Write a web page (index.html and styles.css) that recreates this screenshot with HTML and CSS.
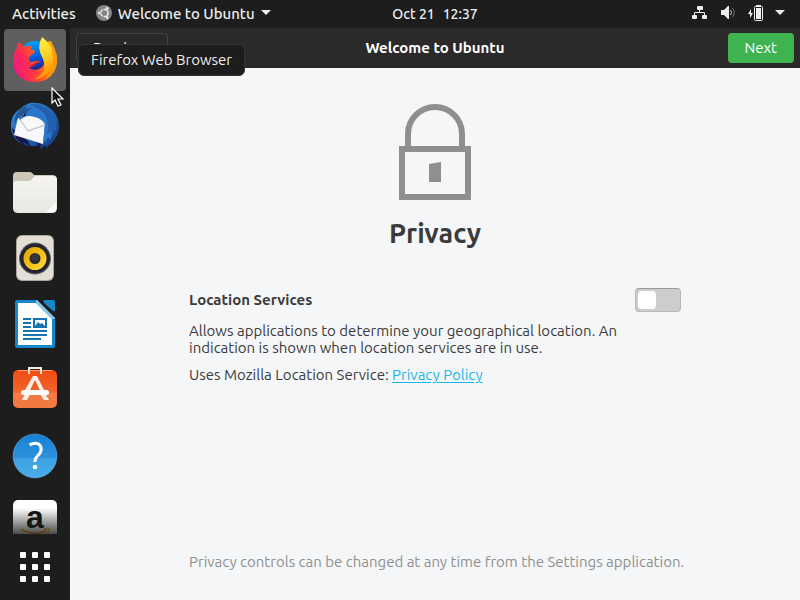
FILE: index.html
```html
<!doctype html>
<html lang="en">
<head>
<meta charset="utf-8">
<meta name="viewport" content="width=device-width, initial-scale=1.0"/>
<title>Welcome to Ubuntu</title>
<link rel="stylesheet" href="styles.css">
</head>
<body>
<header class="topbar">
	<nav class="menus">
		<button type="button">Activities</button>
		<button type="button" class="app-menu">
			<svg width="16" height="16" viewBox="0 0 16 16" aria-hidden="true">
				<circle cx="8" cy="8" r="8" fill="#858585"/>
				<circle cx="8.5" cy="8" r="3.6" fill="none" stroke="#eee" stroke-width="1.5"/>
				<path d="M9 8L5 1M9 8L5 15M1 8h5" stroke="#858585" stroke-width="1"/>
				<circle cx="8.5" cy="8" r="2.5" fill="#858585"/>
				<circle cx="3.2" cy="8" r="1.3" fill="#eee"/>
				<circle cx="11.2" cy="3.4" r="1.3" fill="#eee"/>
				<circle cx="11.2" cy="12.6" r="1.3" fill="#eee"/>
			</svg>
			<span>Welcome to Ubuntu</span>
			<svg width="10" height="6" viewBox="0 0 10 6" aria-hidden="true"><path d="M0 0h10L5 5z" fill="#eee"/></svg>
		</button>
	</nav>
	<button type="button" class="clock"><span>Oct 21</span><span>12:37</span></button>
	<button type="button" class="status" aria-label="System menu">
		<svg width="16" height="16" viewBox="0 0 16 16" fill="#eee"><rect x="6" y="1" width="6" height="4" rx="1"/><rect x="1" y="10" width="5" height="4" rx="1"/><rect x="11" y="10" width="5" height="4" rx="1"/><path d="M8.500 5v3M3.500 10V7.500h10V10" fill="none" stroke="#eee"/></svg>
		<svg width="16" height="16" viewBox="0 0 16 16"><path d="M2 5h3l4-4h1v13H9l-4-4H2z" fill="#eee"/><path d="M11.500 5q2 2.500 0 5" fill="none" stroke="#ccc"/><path d="M13.500 3q3.500 4.500 0 9" fill="none" stroke="#777"/></svg>
		<svg width="16" height="16" viewBox="0 0 16 16"><path d="M4 4L1 9h2v4l3-5H4z" fill="#eee"/><rect x="7.500" y="1.500" width="8" height="14" rx="1" fill="none" stroke="#eee"/><path d="M9 0h5v1H9zM9 3h5v11H9z" fill="#eee"/></svg>
		<svg width="10" height="6" viewBox="0 0 10 6"><path d="M0 0h10L5 5z" fill="#eee"/></svg>
	</button>
</header>

<aside class="dock">
	<ul class="apps">
		<li><button type="button" class="active" aria-label="Firefox Web Browser">
			<svg viewBox="0 0 48 48">
				<defs>
					<linearGradient id="ff-body" x1="0" y1="0.700" x2="1" y2="0.300"><stop offset="0" stop-color="#e8168b"/><stop offset=".25" stop-color="#ff2f4d"/><stop offset=".6" stop-color="#ff6a16"/><stop offset="1" stop-color="#ffb800"/></linearGradient>
					<linearGradient id="ff-globe" x1="0.300" y1="0" x2="0.600" y2="1"><stop offset="0" stop-color="#00a8ff"/><stop offset=".5" stop-color="#0060df"/><stop offset="1" stop-color="#26157c"/></linearGradient>
					<linearGradient id="ff-flame" x1="0" y1="0" x2="0.300" y2="1"><stop offset="0" stop-color="#fff44f"/><stop offset=".5" stop-color="#ffd72a"/><stop offset="1" stop-color="#ff9400"/></linearGradient>
				</defs>
				<path d="M8 6l4 4 28-5 4 9q2 4 2 10c0 13-9 22-22 22S2 38 2 25c0-5 1-9 4-13q0-4 2-6z" fill="url(#ff-body)"/>
				<circle cx="24" cy="21" r="16" fill="url(#ff-globe)"/>
				<path d="M8 6q1 3 4 5 5-2 9-1-2 2-1 4 4 0 4 1 0 2-5 5-2 3-1 5 2 2 6 0 3-1 5 1-3 0-5 3-3 3-7 2 7 6 14 0 4-4 3-10l9-7q3 16-7 22c-13 7-27-1-30-14-1-6 0-10 2-13z" fill="url(#ff-body)"/>
				<path d="M18 29q4 1 7-3 2-1 4 0-3 0-5 3-3 3-6 0z" fill="#c8123b"/>
				<path d="M31 1q4 3 7 7c8 9 7 23-3 31q-5 4-11 4 13-7 8-20-7-12-1-22z" fill="url(#ff-flame)"/>
				<path d="M38 5q6 5 6 11 2 2 2 9-1 13-12 19 8-11 8-21 0-11-4-18z" fill="#ff980e"/>
			</svg>
		</button></li>
		<li><button type="button" aria-label="Thunderbird Mail">
			<svg viewBox="0 0 48 48">
				<defs>
					<linearGradient id="tb-bird" x1="0" y1="0" x2="1" y2="1"><stop offset="0" stop-color="#3a97e0"/><stop offset=".5" stop-color="#2166bb"/><stop offset="1" stop-color="#16387e"/></linearGradient>
				</defs>
				<path d="M9 7q4-4 10-6c17-2 29 10 29 23 0 8-4 15-11 20l-2 3 0-4-6 4 1-4C14 47 0 39 0 24 0 15 4 10 9 7z" fill="url(#tb-bird)"/>
				<path d="M1 26q2 13 14 18l-3-4 8 5-3-6z" fill="#1a1750"/>
				<path d="M24 39q4 3 2 7l5-3z" fill="#1a1750"/>
				<path d="M7 16q5-2 12-2 11 1 15 8l-2 20L3 33z" fill="#f8f8fa"/>
				<path d="M8 16l9 13 17-6" fill="none" stroke="#aeb2bc" stroke-width="1"/>
				<path d="M17 3q14-2 22 10 7 12 0 25l-2-3-3 6-1-3-1 3 2-19q-3-6-12-8-6-1-9 1l-4 3-2-4Q8 7 17 3z" fill="#2a78ca"/>
				<path d="M27 7q13 6 9 26l3-4 1 5 3-7 2 2q2-17-12-24-7-4-14-3z" fill="#2360ad"/>
				<path d="M17 3Q4 7 3 22l5-7q4-4 7-2 2-6 7-7-4-1-8 2 1-3 3-5z" fill="#215796"/>
				<circle cx="13" cy="13" r="1.500" fill="#111827"/>
				<circle cx="12.500" cy="12.500" r=".5" fill="#d8c890"/>
			</svg>
		</button></li>
		<li><button type="button" aria-label="Files">
			<svg viewBox="0 0 48 48">
				<defs><linearGradient id="folder" x1="0" y1="0" x2="0" y2="1"><stop offset="0" stop-color="#f5f4f1"/><stop offset="1" stop-color="#e9e7e2"/></linearGradient></defs>
				<path d="M2 8q0-4 4-4h13q2 0 4 3h18q5 0 5 5v10H2z" fill="#cdc7ba"/>
				<path d="M2 16q0-3 4-3h12q2 0 4-3 1-2 3-2h17q4 0 4 4v28q0 5-5 5H7q-5 0-5-5z" fill="url(#folder)"/>
				<path d="M35 44l10-10v6q0 4-4 4z" fill="#fbfaf8"/>
			</svg>
		</button></li>
		<li><button type="button" aria-label="Rhythmbox">
			<svg viewBox="0 0 48 48">
				<defs><linearGradient id="cone" x1="0" y1="0" x2="1" y2="1"><stop offset="0" stop-color="#dda408"/><stop offset=".5" stop-color="#f2bf15"/><stop offset="1" stop-color="#ffdc4c"/></linearGradient></defs>
				<rect x="5" y="1" width="38" height="46" rx="6" fill="#aaa59a"/>
				<rect x="6" y="2" width="36" height="44" rx="5" fill="#e4dfd5"/>
				<circle cx="24" cy="24.500" r="16" fill="#63636a"/>
				<circle cx="24" cy="24.500" r="15" fill="#24242e"/>
				<circle cx="24" cy="24.500" r="11.500" fill="url(#cone)"/>
				<circle cx="24" cy="24.500" r="5.500" fill="#2a2a2e"/>
				<circle cx="24" cy="23.500" r="3.500" fill="#38383c"/>
			</svg>
		</button></li>
		<li><button type="button" aria-label="LibreOffice Writer">
			<svg viewBox="0 0 48 48">
				<path d="M6 0h20l18 18v28q0 2-2 2H6q-2 0-2-2V2q0-2 2-2z" fill="#1787ca"/>
				<path d="M7 3h18l16 16v26H7z" fill="#fff"/>
				<path d="M25 0h1l18 18v1h-3L25 3z" fill="#8bc6ea"/>
				<path d="M33 0h9q2 0 2 2v9q-1 1-3-1L33 3q-1-2 0-3z" fill="#1787ca"/>
				<path d="M12 19h8M12 23h8M12 27h8M12 31h24M12 35h24M12 39h18" stroke="#1574b4" stroke-width="2"/>
				<rect x="23" y="19" width="12" height="8" fill="none" stroke="#1574b4" stroke-width="2"/>
				<path d="M24 26l3-4 2 2 2-1 3 3z" fill="#1574b4"/>
			</svg>
		</button></li>
		<li><button type="button" aria-label="Ubuntu Software">
			<svg viewBox="0 0 48 48">
				<defs><linearGradient id="bag" x1="0" y1="0" x2="0" y2="1"><stop offset="0" stop-color="#f04b12"/><stop offset=".59" stop-color="#f0672d"/><stop offset=".6" stop-color="#f27b48"/><stop offset="1" stop-color="#f1793f"/></linearGradient></defs>
				<rect x="2" y="4" width="44" height="38" rx="5" fill="url(#bag)"/>
				<path d="M7 4.500h34" stroke="#ff9d70"/>
				<path d="M18 8V2h12v6" fill="none" stroke="#fbe9df" stroke-width="2"/>
				<path d="M22 10h4l7 14h-4l-5-10-5 10h-5zM14 28h5l-3 6h-5zM29 28h5l4 6h-5z" fill="#fff1e9"/>
				<rect x="10" y="24" width="28" height="5" rx="2.500" fill="#fff"/>
			</svg>
		</button></li>
		<li><button type="button" aria-label="Help">
			<svg viewBox="0 0 48 48">
				<defs><linearGradient id="help" x1="0" y1="0" x2="0" y2="1"><stop offset="0" stop-color="#1780d4"/><stop offset=".54" stop-color="#2c92dc"/><stop offset=".55" stop-color="#3ba0e3"/><stop offset="1" stop-color="#4caee9"/></linearGradient></defs>
				<circle cx="24" cy="24" r="22" fill="url(#help)" stroke="#66b3e8" stroke-width=".5"/>
				<path d="M18.500 13q5-3 9-1 4 3 2 8-1 2-3 4-3 3-2.500 6" fill="none" stroke="#fff" stroke-width="3"/>
				<circle cx="24" cy="35" r="2.300" fill="#fff"/>
			</svg>
		</button></li>
		<li><button type="button" aria-label="Amazon">
			<svg viewBox="0 0 48 48">
				<rect x="2" y="2" width="44" height="44" rx="5" fill="#fff"/>
				<text class="amazon" x="24" y="30" text-anchor="middle">a</text>
				<path d="M10 31q14 8 26 1" fill="none" stroke="#ff9900" stroke-width="1.500"/>
				<path d="M33 31q6-2 5 0 0 3-2 5" fill="none" stroke="#ff9900"/>
			</svg>
		</button></li>
	</ul>
	<button type="button" class="show-apps" aria-label="Show Applications">
		<svg width="30" height="30" viewBox="0 0 30 30" fill="#fff">
			<rect width="6" height="6" rx="1"/><rect x="12" width="6" height="6" rx="1"/><rect x="24" width="6" height="6" rx="1"/>
			<rect y="12" width="6" height="6" rx="1"/><rect x="12" y="12" width="6" height="6" rx="1"/><rect x="24" y="12" width="6" height="6" rx="1"/>
			<rect y="24" width="6" height="6" rx="1"/><rect x="12" y="24" width="6" height="6" rx="1"/><rect x="24" y="24" width="6" height="6" rx="1"/>
		</svg>
	</button>
</aside>

<section class="window">
	<header class="titlebar">
		<button type="button" class="btn btn-prev">Previous</button>
		<h1>Welcome to Ubuntu</h1>
		<button type="button" class="btn btn-next">Next</button>
	</header>
	<main class="page">
		<svg class="lock" width="72" height="96" viewBox="0 0 72 96" aria-hidden="true">
			<path d="M9 43V30a27 27 0 0 1 54 0v13M3 45h66v48H3z" fill="none" stroke="#8e908f" stroke-width="6"/>
			<path d="M30 60l12-2v20H30z" fill="#8e908f"/>
		</svg>
		<h2>Privacy</h2>
		<div class="setting">
			<div class="row">
				<label for="location">Location Services</label>
				<input type="checkbox" id="location" class="switch" role="switch">
			</div>
			<p>Allows applications to determine your geographical location. An indication is shown when location services are in use.</p>
			<p>Uses Mozilla Location Service: <a href="#privacy">Privacy Policy</a></p>
		</div>
		<p class="note">Privacy controls can be changed at any time from the Settings application.</p>
	</main>
</section>

<div class="tooltip" role="tooltip">Firefox Web Browser</div>
<svg class="cursor" width="14" height="20" viewBox="0 0 14 20" aria-hidden="true">
	<path d="M1 1v15l3-3 3 6 3-1-3-6h5z" fill="#111" stroke="#fff" stroke-width="1.200"/>
</svg>
</body>
</html>
```
FILE: styles.css
```css
*{box-sizing:border-box}
html,body,ul,h1,h2,p{margin:0;padding:0}
ul{list-style:none}
html,body{height:100%}
body{display:grid;grid-template:28px 1fr / 70px 1fr;position:relative;overflow:hidden;background:#1d1d1d;color:#3b3b3b;font:15px/17px Ubuntu,"Noto Sans",sans-serif}
button{margin:0;padding:0;border:0;background:none;color:inherit;font:inherit}
svg{display:block;flex:none}

/* top panel */
.topbar{grid-column:1 / 3;display:grid;grid-template-columns:70px 1fr auto 1fr;align-items:center;color:#eee;font-weight:500}
.menus{grid-column:1 / 3;display:flex;gap:20px;padding:0 0 2px 12px;white-space:nowrap}
.app-menu{display:flex;align-items:center;gap:6px}
.clock{display:flex;gap:8px;font-size:14px}
.status{display:flex;align-items:center;justify-self:end;gap:12px;padding:0 15px 2px 0}

/* dock */
.dock{display:flex;flex-direction:column;min-height:0}
.apps{flex:1;display:flex;flex-direction:column;gap:4px;min-height:0;padding:1px 4px 0;overflow:hidden;position:relative}
.apps:after{content:"";position:absolute;left:0;right:0;bottom:0;height:26px;background:linear-gradient(rgba(29,29,29,0),rgba(29,29,29,.8))}
.apps li{flex:none}
.apps button{display:flex;align-items:center;justify-content:center;width:100%;height:62px;border-radius:4px}
.apps button svg{width:48px;height:48px}
.apps .active{background:#5f5f5f}
.amazon{font:bold 32px "Liberation Sans",sans-serif;fill:#111}
.show-apps{display:flex;align-items:center;justify-content:center;height:66px}

/* setup window */
.window{display:flex;flex-direction:column;min-height:0;background:#f5f6f8}
.titlebar{display:grid;grid-template-columns:1fr auto 1fr;align-items:center;height:40px;padding:0 6px;background:#2c292a;color:#fff}
.titlebar h1{font-size:15px;line-height:20px}
.btn{height:30px;padding:0 16px 2px;border-radius:4px}
.btn-prev{justify-self:start;border:1px solid #454243;background:#2a2728}
.btn-next{justify-self:end;padding:0 17px 2px;background:#3eb34f}
.page{flex:1;display:flex;flex-direction:column;align-items:center;padding:36px 24px 30px}
.page h2{margin-top:15px;font-size:27px;line-height:36px}
.setting{width:100%;max-width:492px;margin-top:37px}
.row{display:flex;align-items:center;justify-content:space-between;margin-bottom:10px}
.row label{padding-bottom:2px;font-weight:bold}
.setting p{max-width:446px;margin-bottom:10px}
.setting a{color:#19b6ee;text-underline-offset:2px}
.switch{appearance:none;width:46px;height:24px;margin:0;padding:2px;border:1px solid #b8b8b8;border-top-color:#999;border-radius:4px;background:#cdcdcd}
.switch:before{content:"";display:block;width:18px;height:18px;border-radius:4px;background:#fff}
.switch:checked{background:#3eb34f}
.switch:checked:before{margin-left:auto}
.note{width:100%;max-width:500px;padding-left:4px;margin-top:auto;color:#8e908f}

/* overlays */
.tooltip{position:absolute;left:78px;top:44px;padding:6px 12px;border:1px solid #343434;border-radius:6px;background:#1d1d1d;color:#eee;line-height:18px}
.cursor{position:absolute;left:51px;top:87px}
```
